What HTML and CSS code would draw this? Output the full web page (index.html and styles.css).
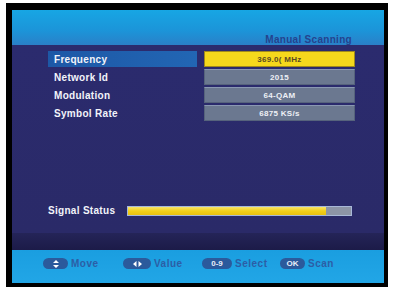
FILE: index.html
```html
<!DOCTYPE html>
<html lang="en">

<head>
    <meta charset="UTF-8">
    <meta name="viewport" content="width=device-width, initial-scale=1.0">
    <title>Manual Scanning</title>

    <link rel="stylesheet" href="styles.css">
</head>

<body>
    <div class="tv">
        <div class="screen">
            <!-- Title bar -->
            <header class="titleBar">
                <h1>Manual Scanning</h1>
            </header>

            <!-- Scan settings -->
            <section class="panel">
                <div class="row active">
                    <span class="label">Frequency</span>
                    <span class="value">369.0( MHz</span>
                </div>
                <div class="row">
                    <span class="label">Network Id</span>
                    <span class="value">2015</span>
                </div>
                <div class="row">
                    <span class="label">Modulation</span>
                    <span class="value">64-QAM</span>
                </div>
                <div class="row">
                    <span class="label">Symbol Rate</span>
                    <span class="value">6875 KS/s</span>
                </div>

                <div class="signal">
                    <span class="label">Signal Status</span>
                    <div class="meter">
                        <div class="meterFill" style="width: 89%"></div>
                    </div>
                </div>
            </section>

            <div class="shade"></div>

            <!-- Key hints -->
            <footer class="hints">
                <span class="hint">
                    <span class="key key-move">
                        <svg width="6" height="8" viewBox="0 0 6 8"><path d="M3 0L6 3H0zM3 8L0 5h6z" fill="#fff"/></svg>
                    </span>Move
                </span>
                <span class="hint">
                    <span class="key key-value">
                        <svg width="9" height="6" viewBox="0 0 9 6"><path d="M0 3L3.5 0v6zM9 3L5.5 0v6z" fill="#fff"/></svg>
                    </span>Value
                </span>
                <span class="hint">
                    <span class="key key-num">0-9</span>Select
                </span>
                <span class="hint">
                    <span class="key key-ok">OK</span>Scan
                </span>
            </footer>
        </div>
    </div>
</body>

</html>
```

FILE: styles.css
```css
body {
    margin: 0;
    background-color: white;
    font-family: "Liberation Sans", Arial, sans-serif;
}

.tv {
    width: 372px;
    height: 273px;
    margin: 3px 0 0 6px;
    border-style: solid;
    border-color: black;
    border-width: 7px 4px 4px 6px;
}

.screen {
    height: 100%;
    display: flex;
    flex-direction: column;
    background-color: #2a2a6c;
}

.titleBar {
    height: 35px;
    display: flex;
    align-items: flex-end;
    justify-content: flex-end;
    padding-right: 32px;
    box-sizing: border-box;
    background: linear-gradient(#17a6e4, #1c94d8 60%, #2a80c8);
}

.titleBar h1 {
    margin: 0;
    font-size: 10px;
    font-weight: bold;
    letter-spacing: 0.3px;
    color: #24438e;
}

.panel {
    flex: 1;
    display: flex;
    flex-direction: column;
    gap: 2px;
    padding: 6px 29px 17px 36px;
    background: linear-gradient(#2b2b6e, #2a2a68);
}

.row {
    display: grid;
    grid-template-columns: 149px 151px;
    column-gap: 7px;
    height: 16px;
}

.label {
    display: flex;
    align-items: center;
    padding-left: 6px;
    font-size: 10px;
    font-weight: bold;
    letter-spacing: 0.3px;
    color: #f2f4fa;
}

.row.active .label {
    background: linear-gradient(90deg, #1d58a6, #2266b4);
}

.value {
    display: flex;
    align-items: center;
    justify-content: center;
    box-sizing: border-box;
    font-size: 8px;
    font-weight: bold;
    letter-spacing: 0.3px;
    color: #eef0f6;
    background-color: #6b7890;
    border: 1px solid #56637c;
    border-top-color: #8a98b2;
}

.row.active .value {
    color: #5a4a22;
    background-color: #f5d81c;
    border-color: #a08a1c;
}

.signal {
    margin-top: auto;
    display: flex;
    align-items: center;
}

.signal .label {
    padding-left: 0;
    width: 79px;
}

.meter {
    width: 225px;
    height: 10px;
    box-sizing: border-box;
    border: 1px solid #a8b8d8;
    background-color: #8d95a6;
}

.meterFill {
    height: 100%;
    background: linear-gradient(#f8e46a, #f2cf18 50%, #e8c010);
}

.shade {
    height: 17px;
    background: linear-gradient(#242458, #1c1b48);
}

.hints {
    height: 33px;
    display: grid;
    grid-template-columns: 80px 79px 78px auto;
    align-items: start;
    padding: 8px 0 0 31px;
    box-sizing: border-box;
    background: linear-gradient(#1a9ee0, #22a6e6);
}

.hint {
    display: flex;
    align-items: center;
    gap: 3px;
    font-size: 10px;
    font-weight: bold;
    letter-spacing: 0.5px;
    color: #2c5ea6;
}

.key {
    display: flex;
    align-items: center;
    justify-content: center;
    box-sizing: border-box;
    height: 11px;
    border-radius: 6px;
    background-color: #2b5a9c;
    color: #e8eef8;
    font-size: 8px;
    letter-spacing: 0;
}

.key-move {
    width: 25px;
}

.key-value {
    width: 28px;
}

.key-num {
    width: 30px;
}

.key-ok {
    width: 25px;
}
```
